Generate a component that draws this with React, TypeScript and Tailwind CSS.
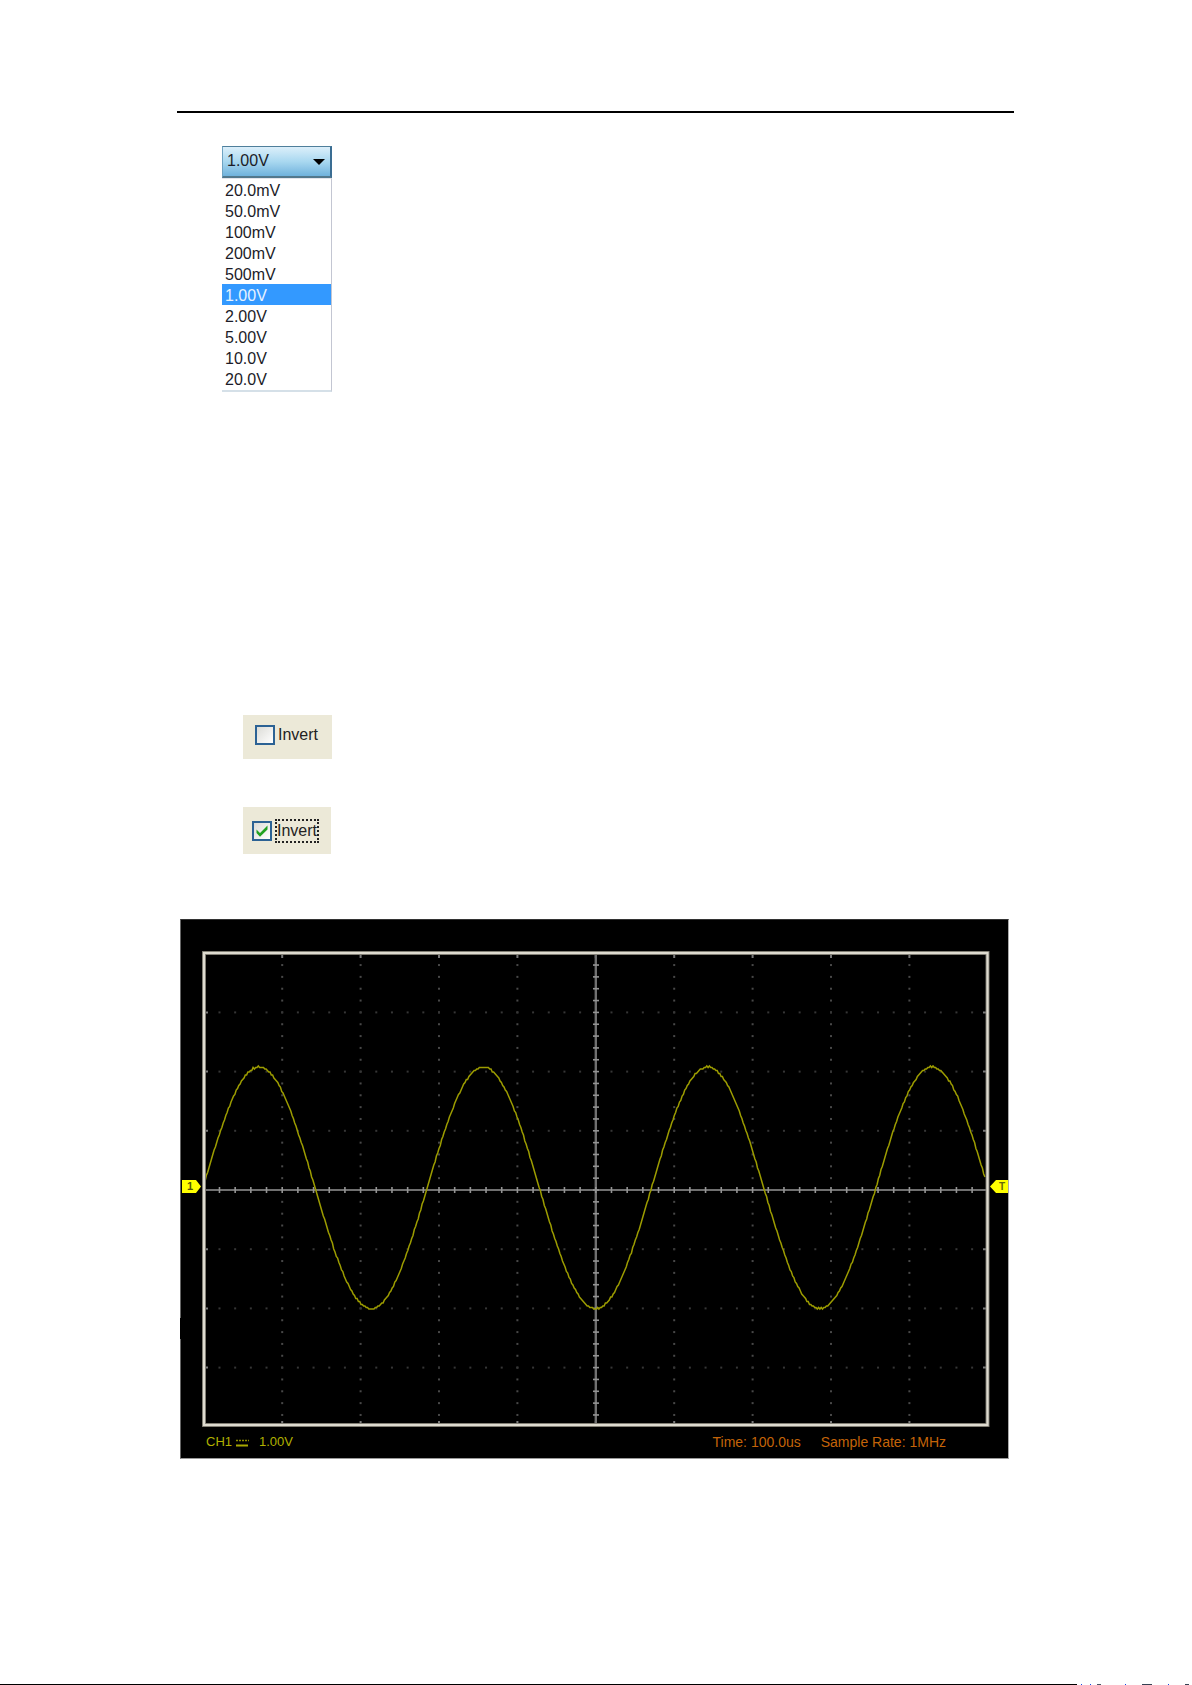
import { useState } from "react";

const RANGES = [
  "20.0mV",
  "50.0mV",
  "100mV",
  "200mV",
  "500mV",
  "1.00V",
  "2.00V",
  "5.00V",
  "10.0V",
  "20.0V",
];

// graticule, in svg units
const LEFT = 24;
const RIGHT = 808;
const TOP = 34;
const BOTTOM = 506;
const MID_X = 415.8;
const MID_Y = 271;
const DIV_X = 78.4;
const DIV_Y = 59.2;

function buildWave() {
  const points: string[] = [];
  for (let x = 25; x <= 806; x += 1.3) {
    const jitter = 0.5 * Math.sin(x * 2.3);
    const y = 268.8 - 120.8 * Math.cos((2 * Math.PI * (x - 79)) / 224.3) + jitter;
    points.push(`${x.toFixed(1)},${(Math.round(y / 1.5) * 1.5).toFixed(1)}`);
  }
  return points.join(" ");
}

function VoltageSelect() {
  const [value, setValue] = useState("1.00V");
  return (
    <div className="w-[110px] text-base text-[#1c1c28]">
      <div className="relative">
        <select
          aria-label="Voltage range"
          value={value}
          onChange={(e) => setValue(e.target.value)}
          className="block h-8 w-full appearance-none border-t border-r-2 border-b-2 border-l border-t-[#4f7f9b] border-r-[#3a6d93] border-b-[#52788c] border-l-[#6ea3c2] bg-linear-to-b from-[#dceffa] from-0% via-[#a9d8f0] via-50% to-[#6fb2dc] to-100% pb-px pl-1 outline-none"
        >
          {RANGES.map((range) => (
            <option key={range}>{range}</option>
          ))}
        </select>
        <svg viewBox="0 0 12 6" className="pointer-events-none absolute top-[13px] right-[7px] h-[6px] w-3">
          <path d="M0 0h12L6 6z" fill="#000" />
        </svg>
      </div>
      <ul
        role="listbox"
        aria-label="Voltage ranges"
        className="border-t border-r border-b-2 border-t-[#e4e4ea] border-r-[#c3c6d2] border-b-[#d5e0e8] pb-px"
      >
        {RANGES.map((range) => (
          <li
            key={range}
            role="option"
            aria-selected={range === value}
            onClick={() => setValue(range)}
            className={
              range === value
                ? "h-[21px] bg-[#3399ff] pl-[3px] leading-[24px] text-[#e6f2ff]"
                : "h-[21px] pl-[3px] leading-[24px]"
            }
          >
            {range}
          </li>
        ))}
      </ul>
    </div>
  );
}

function InvertBox({ initial }: { initial: boolean }) {
  const [checked, setChecked] = useState(initial);
  return (
    <label
      className={
        initial
          ? "flex h-[47px] w-[88px] items-center gap-[3px] bg-[#ece9d8] pl-[9px]"
          : "flex h-11 w-[89px] items-center gap-[3px] bg-[#ece9d8] pb-1 pl-3"
      }
    >
      <span className="relative size-5 shrink-0">
        <input
          type="checkbox"
          checked={checked}
          onChange={(e) => setChecked(e.target.checked)}
          className="block size-5 appearance-none border-2 border-[#2c6294] bg-linear-to-br from-[#dcdcd7] to-white outline-none"
        />
        {checked && (
          <svg viewBox="0 0 20 20" className="pointer-events-none absolute inset-0">
            <path d="M4.5 8.5 8 12l7.500-7.500v4L8 15.800 4.500 12z" fill="#21a121" />
          </svg>
        )}
      </span>
      <span
        className={
          initial
            ? "flex h-6 w-11 items-center justify-center border-2 border-dotted border-[#222]"
            : "flex h-6 items-center"
        }
      >
        Invert
      </span>
    </label>
  );
}

function Graticule() {
  const cols = Array.from({ length: 9 }, (_, i) => MID_X + (i - 4) * DIV_X);
  const rows = Array.from({ length: 7 }, (_, i) => MID_Y + (i - 3) * DIV_Y);
  const ticksX = Array.from({ length: 49 }, (_, i) => MID_X + ((i - 24) * DIV_X) / 5);
  const ticksY = Array.from({ length: 39 }, (_, i) => MID_Y + ((i - 19) * DIV_Y) / 5);

  return (
    <g>
      {/* dotted divisions */}
      {cols.map((x) => ticksY.map((y) => <rect key={`${x}-${y}`} x={x - 1} y={y - 1} width="2" height="2" fill="#484848" />))}
      {rows.map((y) => ticksX.map((x) => <rect key={`${x}-${y}`} x={x - 1} y={y - 1} width="2" height="2" fill="#363636" />))}
      {cols.map((x) => (
        <path key={x} d={`M${x} 35v4M${x} 502v4`} stroke="#7a7a7a" strokeWidth="2" />
      ))}
      {rows.map((y) => (
        <path key={y} d={`M26 ${y}h2M803 ${y}h3`} stroke="#7a7a7a" strokeWidth="2" />
      ))}

      {/* axes */}
      <path d={`M${LEFT} ${MID_Y}H${RIGHT}`} stroke="#707070" strokeWidth="2" />
      <path d={`M${MID_X} ${TOP}V${BOTTOM}`} stroke="#707070" strokeWidth="2.4" />
      {ticksX.map((x) => (
        <path key={x} d={`M${x} 268v6`} stroke="#949494" strokeWidth="1.6" />
      ))}
      {ticksY.map((y) => (
        <path key={y} d={`M413 ${y}h6`} stroke="#949494" strokeWidth="1.6" />
      ))}
    </g>
  );
}

function Scope() {
  return (
    <section className="relative border border-t-[#333] border-r-[#aaa] border-b-[#999] border-l-[#666] bg-black">
      <span className="absolute top-[398px] -left-px h-[21px] w-px bg-black" />
      <svg viewBox="1 1 827 507" className="block w-full" role="img" aria-label="Channel 1 waveform">
        <Graticule />
        <polyline points={buildWave()} fill="none" stroke="#9c9c00" strokeWidth="1.5" />
        <rect x="24" y="34" width="783.5" height="472" fill="none" stroke="#77746a" strokeWidth="4" />
        <rect x="24" y="34" width="783.5" height="472" fill="none" stroke="#dedbd0" strokeWidth="2.2" />

        {/* channel and trigger markers */}
        <path d="M2 261h14l5 6.500-5 6.500H2z" fill="#ffff00" />
        <text x="10" y="271" textAnchor="middle" fontSize="11" fontWeight="700" fill="#55550a">
          1
        </text>
        <path d="M829 261h-13l-6 6.500 6 6.500h13z" fill="#ffff00" />
        <text x="822" y="271" textAnchor="middle" fontSize="10" fontWeight="700" fill="#66660a">
          T
        </text>
      </svg>
      <div className="flex h-[31px] items-center justify-between pr-[62px] pb-px pl-[25px]">
        <div className="flex items-center text-[13px] text-[#b0b000]">
          <span>CH1</span>
          <svg viewBox="0 0 13 8" className="mt-px mr-2.5 ml-1 h-2 w-[13px]">
            <path d="M0 1.500h13" stroke="#8c8c00" strokeWidth="1.500" strokeDasharray="2 1" />
            <path d="M0 6.500h12" stroke="#a8a800" strokeWidth="2" />
          </svg>
          <span>1.00V</span>
        </div>
        <div className="flex gap-5 text-sm text-[#c46408]">
          <span>Time: 100.0us</span>
          <span>Sample Rate: 1MHz</span>
        </div>
      </div>
    </section>
  );
}

export default function App() {
  return (
    <div className="flex min-h-screen flex-col bg-white font-['Liberation_Sans',Arial,sans-serif]">
      <main className="mx-auto w-full max-w-[838px] pt-[111px]">
        <hr className="mr-px border-t-2 border-black" />
        <div className="mt-[33px] ml-[45px]">
          <VoltageSelect />
        </div>
        <div className="mt-[323px] ml-[66px] space-y-12 text-base text-[#222]">
          <InvertBox initial={false} />
          <InvertBox initial={true} />
        </div>
        <div className="mt-[65px] mr-1.5 ml-[3px]">
          <Scope />
        </div>
      </main>
      <footer className="mt-auto flex h-px">
        <div className="w-[1077px] bg-black" />
        <div className="ml-1 w-px bg-blue-700" />
        <div className="ml-2 w-px bg-blue-700" />
        <div className="ml-1.5 w-1 bg-gray-600" />
        <div className="ml-6 w-px bg-blue-700" />
        <div className="ml-4 w-2.5 bg-gray-700" />
        <div className="ml-4 w-px bg-blue-700" />
        <div className="ml-4 w-1 bg-gray-700" />
      </footer>
    </div>
  );
}
